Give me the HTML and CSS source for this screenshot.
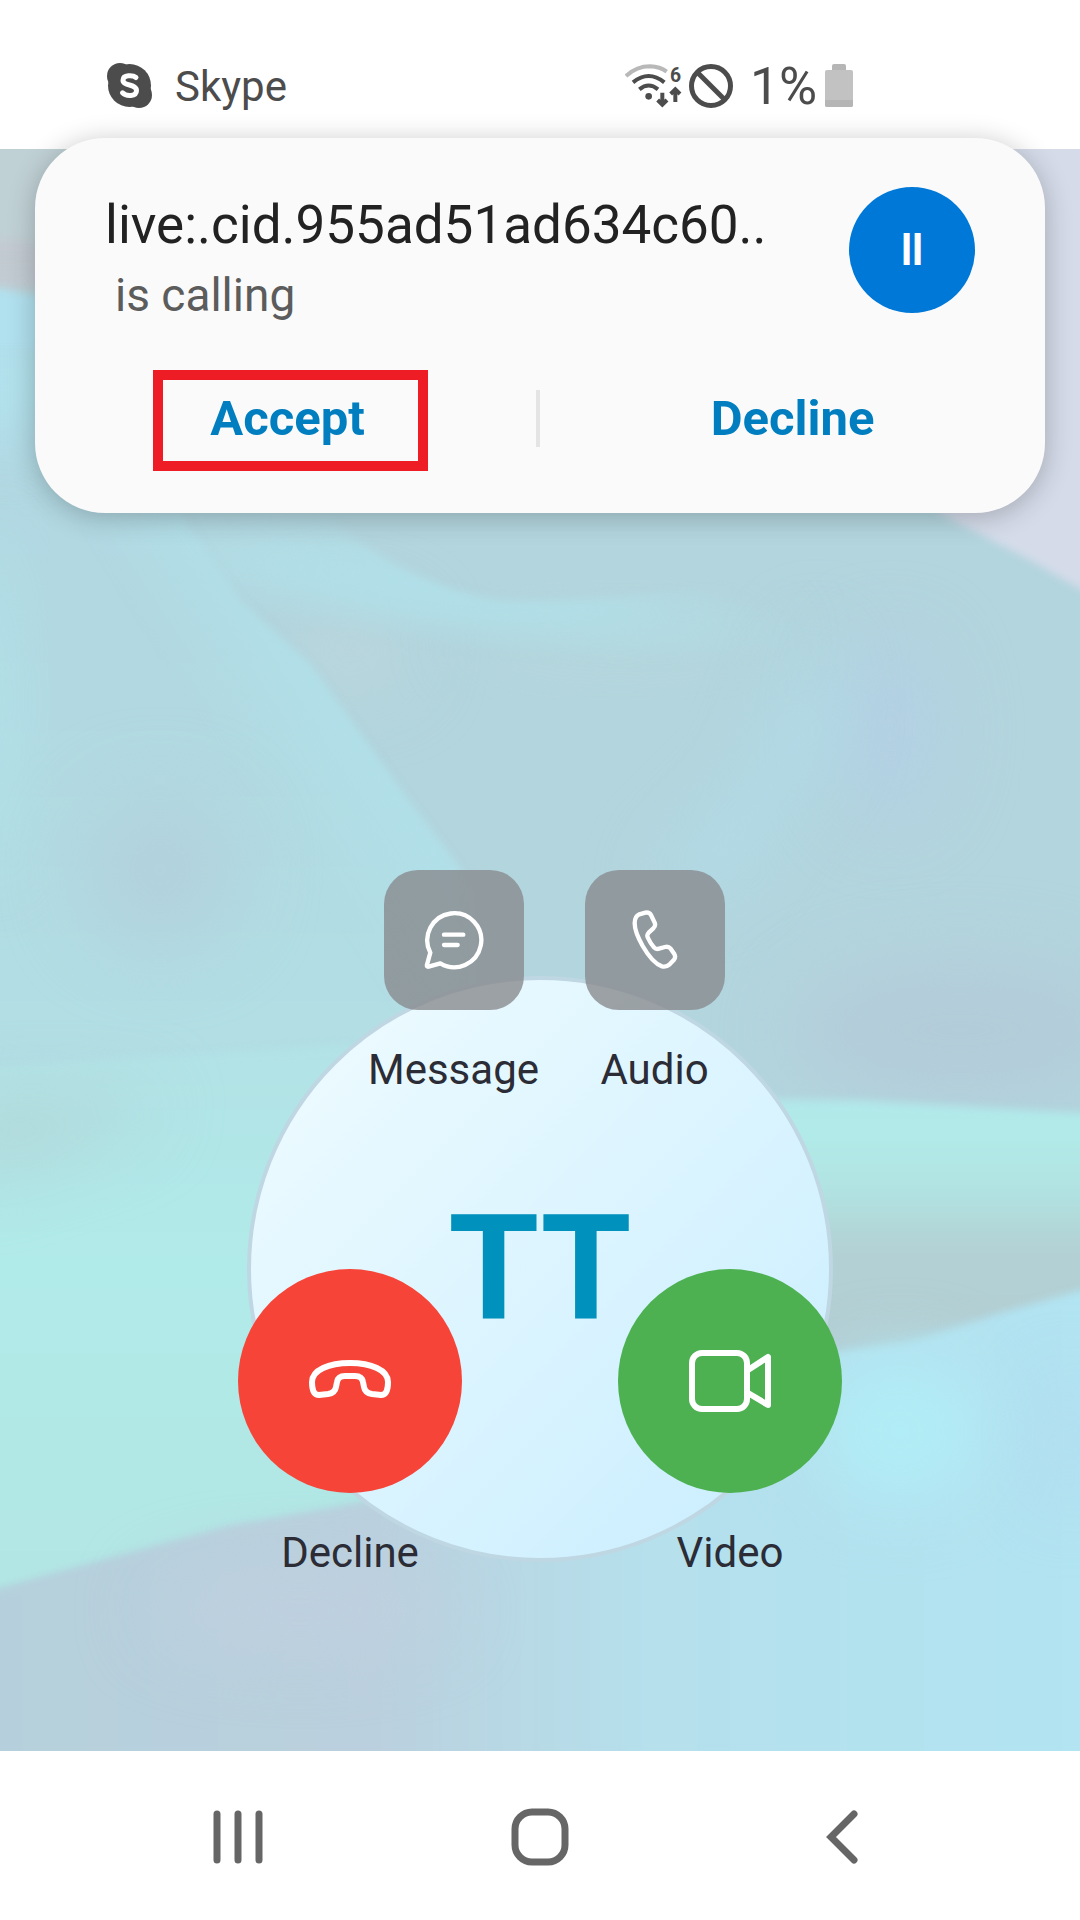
FILE: index.html
```html
<!DOCTYPE html>
<html lang="en">
<head>
  <meta charset="utf-8">
  <meta name="viewport" content="width=device-width, initial-scale=1">
  <title>Skype – incoming call</title>
  <link rel="stylesheet" href="styles.css">
</head>
<body>
  <div class="phone">
    <header class="status-bar">
      <svg class="skype-logo" viewBox="0 0 45 45" aria-hidden="true">
        <circle cx="13" cy="13" r="13"/><circle cx="32" cy="32" r="13"/><circle cx="22.500" cy="22.500" r="21.500"/>
        <path d="M29 14.500C26 12 16 11.500 16 17.200C16 23.500 29.500 20.500 29.500 27.500C29.500 33.800 19 33.500 15.500 29.800"/>
      </svg>
      <span class="app-name">Skype</span>
      <div class="indicators">
        <svg class="wifi" viewBox="0 -24 180 180" aria-label="Wi-Fi 6">
          <path class="faint" d="M3 36Q35 7 75 7Q105 8 125 23"/>
          <path d="M24 55Q71 17 118 55M43 76Q71 53 99 76"/>
          <circle cx="71" cy="97" r="10"/>
          <path d="M112 86V122M98 108L112 122L126 108M151 114V78M137 90L151 76L165 90"/>
          <text x="135" y="53">6</text>
        </svg>
        <svg class="blocked" viewBox="0 0 44 44" aria-hidden="true"><circle cx="22" cy="22" r="19.500"/><path d="M8 8L36 36"/></svg>
        <span class="battery-level">1%</span>
        <svg class="battery" viewBox="0 0 28 43" aria-hidden="true">
          <rect x="7" width="14" height="10" rx="2" fill="#b6b6b6"/><rect y="6" width="28" height="37" rx="2" fill="#c2c2c2"/><path d="M0 36H28V41Q28 43 26 43H2Q0 43 0 41Z" fill="#b5b5b5"/>
        </svg>
      </div>
    </header>

    <main class="call">
      <svg class="wallpaper" viewBox="0 149 1080 1602" preserveAspectRatio="none" aria-hidden="true">
        <defs>
          <filter id="soft" x="-20%" y="-20%" width="140%" height="140%" color-interpolation-filters="sRGB"><feGaussianBlur stdDeviation="4"/></filter>
          <filter id="haze" x="-100%" y="-100%" width="300%" height="300%" color-interpolation-filters="sRGB"><feGaussianBlur stdDeviation="36"/></filter>
          <linearGradient id="left" x1="0" y1="0" x2="0" y2="1"><stop offset="0" stop-color="#b2d8e6"/><stop offset=".5" stop-color="#b2d8e1"/><stop offset="1" stop-color="#b2dfe5"/></linearGradient>
          <linearGradient id="glow" gradientUnits="userSpaceOnUse" x1="240" y1="780" x2="345" y2="710"><stop offset="0" stop-color="#b1dfe8" stop-opacity="0"/><stop offset="1" stop-color="#b1dfe8"/></linearGradient>
          <radialGradient id="fold" gradientUnits="userSpaceOnUse" cx="0" cy="0" r="1" gradientTransform="translate(430 585) rotate(8) scale(380 62)"><stop offset="0" stop-color="#b1dfe8"/><stop offset=".4" stop-color="#b1dfe8" stop-opacity=".8"/><stop offset="1" stop-color="#b1dfe8" stop-opacity="0"/></radialGradient>
          <linearGradient id="mint" x1="0" y1="0" x2="0" y2="1"><stop offset="0" stop-color="#b2e2e6"/><stop offset=".4" stop-color="#b1ebe9"/><stop offset="1" stop-color="#b2e6e4"/></linearGradient>
          <linearGradient id="band" x1="0" y1="0" x2="0" y2="1"><stop offset="0" stop-color="#b2e7e9"/><stop offset=".12" stop-color="#b1ebe9"/><stop offset=".32" stop-color="#b1e4e3"/><stop offset=".55" stop-color="#b3d2d5"/><stop offset="1" stop-color="#b3ccd2"/></linearGradient>
          <linearGradient id="floor"><stop offset="0" stop-color="#b5d0dc"/><stop offset=".35" stop-color="#bbd0de"/><stop offset=".6" stop-color="#b5e0ec"/><stop offset="1" stop-color="#b2e4f2"/></linearGradient>
        </defs>
        <rect y="149" width="1080" height="1602" fill="#b3d5de"/>
        <ellipse filter="url(#haze)" cx="350" cy="650" rx="60" ry="40" fill="#bbd6dc"/>
        <ellipse filter="url(#haze)" cx="620" cy="640" rx="160" ry="20" fill="#b8d8dc"/>
        <path fill="url(#fold)" filter="url(#soft)" d="M190 500H310Q400 585 500 600Q620 605 820 570V680H190Z"/>
        <ellipse filter="url(#haze)" cx="890" cy="730" rx="50" ry="90" fill="#b3d0e4"/>
        <path filter="url(#haze)" fill="#b1deeb" d="M820 620L830 740L720 890H650L760 780Z"/>
        <ellipse filter="url(#haze)" cx="960" cy="1030" rx="170" ry="70" fill="#b3ccd9"/>
        <path filter="url(#soft)" fill="url(#left)" d="M-20 149H-20V1090L480 1070V890L460 870L400 790L310 665L240 600L185 520L100 149Z"/>
        <path filter="url(#soft)" fill="url(#glow)" d="M80 520H185L240 600L310 665L400 790L460 870V1040H400Z"/>
        <ellipse filter="url(#haze)" cx="160" cy="870" rx="80" ry="80" fill="#b2d2dd"/>
        <ellipse filter="url(#haze)" cx="-10" cy="700" rx="20" ry="180" fill="#b1e4ec"/>
        <path filter="url(#soft)" fill="#c0d1d5" d="M-20 130H160V300H-20Z"/>
        <ellipse filter="url(#soft)" cx="10" cy="265" rx="36" ry="26" fill="#c3cad1"/>
        <path filter="url(#haze)" fill="#b1e3ee" d="M-60 330L60 330V430L-60 430Z"/>
        <path filter="url(#soft)" fill="#b1e0ee" d="M-20 285L60 300V350L-20 350Z"/>
        <path filter="url(#soft)" fill="#d5dbe9" d="M920 130H1100V600L1080 589L1030 560L945 516L900 480Z"/>
        <path filter="url(#soft)" fill="url(#mint)" d="M-20 1068L350 1045L600 1250L540 1470L230 1530L-20 1595Z"/>
        <path filter="url(#haze)" fill="#b2d6d8" d="M-40 1100H160L120 1130L-40 1180Z"/>
        <path filter="url(#soft)" fill="url(#band)" d="M700 1098L860 1100L1100 1114V1290L840 1352L700 1370Z"/>
        <path filter="url(#soft)" fill="url(#floor)" d="M-20 1595L80 1567L230 1526L500 1480L840 1352L910 1343L1000 1314L1100 1285V1780H-20Z"/>
        <ellipse filter="url(#haze)" cx="900" cy="1430" rx="80" ry="70" fill="#b1edf6"/>
        <ellipse filter="url(#haze)" cx="1070" cy="1440" rx="30" ry="60" fill="#b2dcf1"/>
        <ellipse filter="url(#haze)" cx="300" cy="1610" rx="150" ry="40" fill="#bfd0df"/>
      </svg>

      <div class="contact-avatar">TT</div>

      <div class="controls">
        <div class="small-actions">
          <button class="action" type="button">
            <span class="tile">
              <svg class="icon-message" viewBox="0 0 180 180" aria-hidden="true"><path d="M49 160L14 170Q7 171 9 164L19 128A81 81 0 1 1 49 160ZM60 74H118M60 105H101"/></svg>
            </span>
            <span class="label">Message</span>
          </button>
          <button class="action" type="button">
            <span class="tile">
              <svg class="icon-audio" viewBox="0 0 138 180" aria-hidden="true"><path d="M22 13L40 8Q52 6 57 15L68 38Q72 48 64 55L50 68Q43 75 48 84Q54 98 66 112Q72 119 81 116L99 111Q109 108 116 116L127 132Q132 141 126 149L113 163Q103 172 90 169Q62 160 32 108Q8 66 8 40Q8 19 22 13Z"/></svg>
            </span>
            <span class="label">Audio</span>
          </button>
        </div>
        <div class="main-actions">
          <button class="action" type="button">
            <span class="round decline">
              <svg class="icon-hangup" viewBox="0 0 82 42" aria-hidden="true"><path d="M3 22C3 10 20 3 41 3S79 10 79 22Q79 35 72 35L63 34Q56 33 55 27L54 22Q53 16 46 16H36Q29 16 28 22L27 27Q26 33 19 34L10 35Q3 35 3 22Z"/></svg>
            </span>
            <span class="label">Decline</span>
          </button>
          <button class="action" type="button">
            <span class="round video">
              <svg class="icon-video" viewBox="0 0 82 62" aria-hidden="true"><rect x="3" y="3" width="55" height="56" rx="10"/><path d="M59 20L79 7V55L59 43"/></svg>
            </span>
            <span class="label">Video</span>
          </button>
        </div>
      </div>
    </main>

    <nav class="nav-bar">
      <button type="button" aria-label="Recents"><svg width="56" height="58" viewBox="0 0 56 58"><path d="M7 6V52M28 6V52M49 6V52"/></svg></button>
      <button type="button" aria-label="Home"><svg width="58" height="58" viewBox="0 0 58 58"><rect x="4" y="4" width="50" height="50" rx="17"/></svg></button>
      <button type="button" aria-label="Back"><svg width="34" height="58" viewBox="0 0 34 58"><path d="M29 6L6 29L29 52"/></svg></button>
    </nav>

    <section class="notification">
      <div class="caller">
        <div class="caller-text">
          <h1>live:.cid.955ad51ad634c60..</h1>
          <p>is calling</p>
        </div>
        <div class="caller-avatar">ll</div>
      </div>
      <div class="answers">
        <button type="button">Accept<span class="highlight"></span></button>
        <button type="button">Decline</button>
      </div>
    </section>
  </div>
</body>
</html>
```
FILE: styles.css
```css
* {
  box-sizing: border-box;
}

body {
  margin: 0;
  background: #fff;
  font-family: Roboto, "Liberation Sans", sans-serif;
}

button {
  margin: 0;
  padding: 0;
  border: 0;
  background: none;
  font: inherit;
  color: inherit;
}

svg {
  display: block;
  flex: none;
}

.phone {
  position: relative;
  display: flex;
  flex-direction: column;
  min-height: 100vh;
}

/* Status bar */
.status-bar {
  display: flex;
  align-items: center;
  height: 149px;
  padding: 22px 21% 0 107px;
  color: #4c4c4c;
}

.skype-logo {
  width: 45px;
  height: 45px;
  fill: #4c4c4c;
}

.skype-logo path {
  fill: none;
  stroke: #fff;
  stroke-width: 5;
  stroke-linecap: round;
}

.app-name {
  margin-left: 23px;
  padding-top: 2px;
  font-size: 42px;
  line-height: 50px;
}

.indicators {
  display: flex;
  align-items: center;
  margin-left: auto;
}

.wifi {
  width: 60px;
  height: 60px;
  fill: none;
  stroke: #4c4c4c;
  stroke-width: 12;
}

.wifi .faint {
  stroke: #b8b8b8;
}

.wifi circle,
.wifi text {
  fill: #4c4c4c;
  stroke: none;
}

.wifi text {
  font-size: 58px;
  font-weight: 700;
}

.blocked {
  width: 44px;
  height: 44px;
  margin-left: 4px;
  fill: none;
  stroke: #4c4c4c;
  stroke-width: 5;
}

.battery-level {
  margin: 0 8px 0 17px;
  padding-top: 2px;
  font-size: 52px;
  line-height: 60px;
}

.battery {
  width: 28px;
  height: 43px;
}

/* Call screen */
.call {
  position: relative;
  flex: 1;
  display: grid;
  justify-items: center;
  align-content: end;
  padding: 400px 0 173px;
  overflow: hidden;
}

.wallpaper {
  position: absolute;
  inset: 0;
  width: 100%;
  height: 100%;
}

.contact-avatar,
.controls {
  position: relative;
  grid-area: 1 / 1;
}

.contact-avatar {
  display: flex;
  align-items: center;
  justify-content: center;
  width: 586px;
  height: 586px;
  margin-top: 106px;
  border: 4px solid #bfd7e2;
  border-radius: 50%;
  background: linear-gradient(135deg, #f0fcff, #c8edff);
  color: #0091bd;
  font-size: 147px;
  font-weight: 700;
}

.controls {
  display: flex;
  flex-direction: column;
  gap: 174px;
  width: 760px;
  max-width: 100%;
}

.small-actions,
.main-actions {
  display: flex;
  justify-content: center;
}

.small-actions {
  padding-left: 28px;
}

.action {
  display: flex;
  flex-direction: column;
  align-items: center;
  gap: 35px;
}

.small-actions .action {
  width: 201px;
}

.main-actions .action {
  flex: 1;
}

.tile,
.round {
  display: flex;
  align-items: center;
  justify-content: center;
}

.tile {
  width: 140px;
  height: 140px;
  border-radius: 34px;
  background: rgba(136, 139, 142, 0.8);
}

.round {
  width: 224px;
  height: 224px;
  border-radius: 50%;
}

.decline {
  background: #f64438;
}

.video {
  background: #4db051;
}

.action svg {
  fill: none;
  stroke: #fff;
  stroke-width: 6;
  stroke-linecap: round;
  stroke-linejoin: round;
}

.tile svg {
  height: 60px;
  stroke-width: 13;
}

.icon-hangup,
.icon-video {
  width: 82px;
}

.label {
  color: #2b2c35;
  font-size: 42px;
  line-height: 50px;
}

/* System navigation */
.nav-bar {
  display: grid;
  grid-template-columns: repeat(3, 1fr);
  height: 169px;
  padding: 2px 8% 0;
}

.nav-bar button {
  display: flex;
  align-items: center;
  justify-content: center;
}

.nav-bar svg {
  fill: none;
  stroke: #666;
  stroke-width: 7;
  stroke-linecap: round;
}

/* Heads-up notification */
.notification {
  position: absolute;
  top: 138px;
  left: 35px;
  right: 35px;
  padding: 49px 0 44px;
  border-radius: 70px;
  background: #fafafa;
  box-shadow: 0 4px 28px rgba(0, 0, 0, 0.24);
}

.caller {
  display: flex;
  justify-content: space-between;
  align-items: flex-start;
  padding: 0 70px;
}

.caller-text {
  padding-top: 7px;
}

.caller h1,
.caller p {
  margin: 0;
  font-weight: 400;
}

.caller h1 {
  color: #222;
  font-size: 53px;
  line-height: 62px;
}

.caller p {
  margin-top: 12px;
  padding-left: 10px;
  color: #5c5c5c;
  font-size: 46px;
  line-height: 54px;
}

.caller-avatar {
  display: flex;
  align-items: center;
  justify-content: center;
  width: 126px;
  height: 126px;
  border-radius: 50%;
  background: #0078d7;
  color: #fff;
  font-size: 42px;
  font-weight: 700;
}

.answers {
  display: grid;
  grid-template-columns: 1fr 1fr;
  margin-top: 46px;
}

.answers button {
  position: relative;
  height: 101px;
  color: #007ebf;
  font-size: 49px;
  font-weight: 700;
  line-height: 56px;
}

.answers button + button::before {
  content: "";
  position: absolute;
  left: -4px;
  top: 22px;
  width: 4px;
  height: 57px;
  background: #e4e4e4;
}

.highlight {
  position: absolute;
  inset: 2px 112px -2px 118px;
  border: 10px solid #ee1c24;
}
```
